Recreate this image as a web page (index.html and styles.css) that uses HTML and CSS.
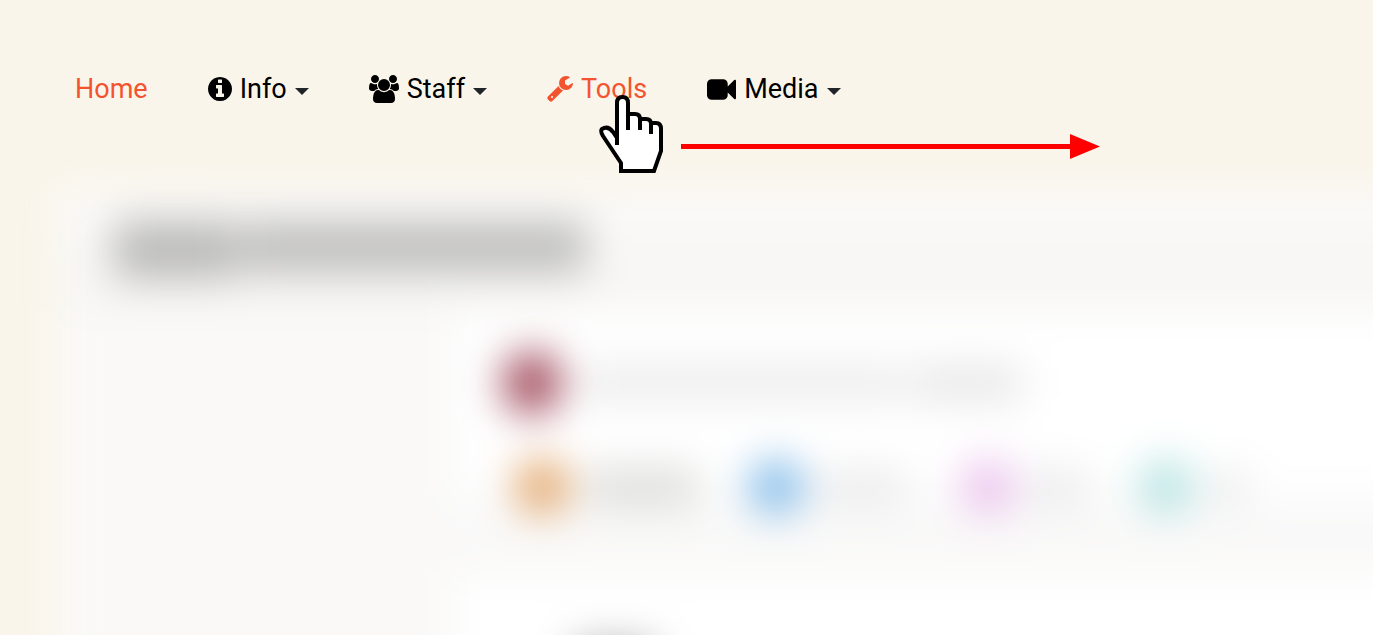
FILE: index.html
```
<!DOCTYPE html>
<html lang="en">
  <head>
    <meta charset="UTF-8" />
    <meta name="viewport" content="width=device-width, initial-scale=1.0" />
    <title>Tools</title>
    <link rel="stylesheet" href="styles.css" />
  </head>

  <body>
    <!-- navigation -->
    <nav class="navbar">
      <ul class="nav-list">
        <li class="nav-item">
          <a class="nav-link active" href="#home">Home</a>
        </li>
        <li class="nav-item">
          <button class="nav-link" type="button" aria-haspopup="true">
            <svg class="icon" width="24" height="24" viewBox="128 128 1536 1536" aria-hidden="true"><path d="M1152 1376v-160q0-14-9-23t-23-9h-96v-512q0-14-9-23t-23-9h-320q-14 0-23 9t-9 23v160q0 14 9 23t23 9h96v320h-96q-14 0-23 9t-9 23v160q0 14 9 23t23 9h448q14 0 23-9t9-23zm-128-896v-160q0-14-9-23t-23-9h-192q-14 0-23 9t-9 23v160q0 14 9 23t23 9h192q14 0 23-9t9-23zm640 416q0 209-103 385.5t-279.5 279.5-385.5 103-385.5-103-279.5-279.5-103-385.5 103-385.5 279.5-279.5 385.5-103 385.5 103 279.5 279.5 103 385.5z" /></svg>
            Info
            <span class="caret"></span>
          </button>
        </li>
        <li class="nav-item">
          <button class="nav-link" type="button" aria-haspopup="true">
            <svg class="icon" width="30" height="28" viewBox="-64 0 1920 1792" aria-hidden="true"><path d="M529 896q-162 5-265 128h-134q-82 0-138-40.500t-56-118.500q0-353 124-353 6 0 43.500 21t97.500 42.500 119 21.500q67 0 133-23-5 37-5 66 0 139 81 256zm1071 637q0 120-73 189.500t-194 69.500h-874q-121 0-194-69.500t-73-189.500q0-53 3.500-103.500t14-109 26.500-108.500 43-97.500 62-81 85.500-53.500 111.500-20q10 0 43 21.500t73 48 107 48 135 21.500 135-21.500 107-48 73-48 43-21.500q61 0 111.500 20t85.500 53.500 62 81 43 97.500 26.500 108.500 14 109 3.500 103.500zm-1024-1277q0 106-75 181t-181 75-181-75-75-181 75-181 181-75 181 75 75 181zm704 384q0 159-112.500 271.500t-271.500 112.500-271.500-112.500-112.500-271.500 112.500-271.500 271.500-112.500 271.500 112.500 112.500 271.500zm576 225q0 78-56 118.500t-138 40.500h-134q-103-123-265-128 81-117 81-256 0-29-5-66 66 23 133 23 59 0 119-21.500t97.500-42.500 43.500-21q124 0 124 353zm-128-609q0 106-75 181t-181 75-181-75-75-181 75-181 181-75 181 75 75 181z" /></svg>
            Staff
            <span class="caret"></span>
          </button>
        </li>
        <li class="nav-item">
          <a class="nav-link active" href="#tools">
            <svg class="icon" width="26" height="26" viewBox="64 128 1664 1664" aria-hidden="true"><path d="M448 1472q0-26-19-45t-45-19-45 19-19 45 19 45 45 19 45-19 19-45zm644-420l-682 682q-37 37-90 37-52 0-91-37l-106-108q-38-36-38-90 0-53 38-91l681-681q39 98 114.500 173.500t173.500 114.500zm634-435q0 39-23 106-47 134-164.500 217.500t-258.500 83.500q-185 0-316.500-131.500t-131.500-316.500 131.500-316.500 316.500-131.500q58 0 121.500 16.500t107.500 46.500q16 11 16 28t-16 28l-293 169v224l193 107q5-3 79-48.500t135.500-81 70.500-35.500q15 0 23.500 10t8.500 25z" /></svg>
            Tools
          </a>
          <!-- hand and arrow lie over the page -->
          <div class="pointer">
            <svg width="66" height="79" viewBox="0 0 66 79" aria-hidden="true">
              <path d="M18 47V8Q18 2 23.500 2T29 8V19H36Q41 19 41 24H47Q52 24 52 28H57Q62 28 62 34V56L55 76H22V68L4 41Q1 36 3 34Q9 30 14 37L18 43Z" fill="#fff" />
              <path d="M18 50V8Q18 2 23.500 2T29 8V35M29 19H36Q41 19 41 24V35M41 24H47Q52 24 52 29V39M52 28H57Q62 28 62 34V56L55 76H22V68L4 41Q1 36 3 34Q9 30 14 37L18 43" fill="none" stroke="#000" stroke-width="4" />
            </svg>
            <svg class="arrow" width="419" height="26" viewBox="0 0 419 26" aria-hidden="true">
              <path d="M0 10H389V0L419 12.500L389 25V15H0Z" fill="#f00" />
            </svg>
          </div>
        </li>
        <li class="nav-item">
          <button class="nav-link" type="button" aria-haspopup="true">
            <svg class="icon" width="29" height="21" viewBox="0 256 1792 1280" aria-hidden="true"><path d="M1792 352v1088q0 42-39 59-13 5-25 5-27 0-45-19l-403-403v166q0 119-84.500 203.500t-203.500 84.500h-704q-119 0-203.500-84.500t-84.500-203.500v-704q0-119 84.500-203.500t203.500-84.500h704q119 0 203.500 84.500t84.500 203.500v165l403-402q18-19 45-19 12 0 25 5 39 17 39 59z" /></svg>
            Media
            <span class="caret"></span>
          </button>
        </li>
      </ul>
    </nav>

    <!-- blurred content -->
    <main class="content" aria-hidden="true">
      <div class="title-row">
        <span class="word word-short"></span>
        <span class="word word-long"></span>
      </div>
      <div class="columns">
        <div class="card card-people">
          <div class="row">
            <span class="dot dot-maroon"></span>
            <span class="line line-name"></span>
            <span class="line line-end"></span>
          </div>
          <div class="row row-tags">
            <span class="dot dot-orange"></span>
            <span class="line line-orange"></span>
            <span class="dot dot-blue"></span>
            <span class="line line-blue"></span>
            <span class="dot dot-pink"></span>
            <span class="line line-pink"></span>
            <span class="dot dot-teal"></span>
            <span class="line line-teal"></span>
          </div>
        </div>
        <div class="card card-next">
          <span class="line line-next"></span>
        </div>
      </div>
    </main>
  </body>
</html>
```

FILE: styles.css
```
* {
  box-sizing: border-box;
}

body {
  margin: 0;
  height: 100vh;
  overflow: hidden;
  background-color: #faf5ea;
  font-family: Roboto, "Liberation Sans", sans-serif;
  font-size: 27px;
}

.navbar {
  position: relative;
  z-index: 1;
  padding: 69px 75px 0;
}

.nav-list {
  display: flex;
  gap: 60px;
  margin: 0;
  padding: 0;
  list-style: none;
}

.nav-item {
  position: relative;
}

.nav-link {
  display: flex;
  align-items: center;
  gap: 8px;
  height: 40px;
  padding: 0;
  border: 0;
  background: none;
  color: #000;
  font: inherit;
  text-decoration: none;
  cursor: pointer;
}

.nav-link.active,
.nav-link:hover {
  color: #f4532f;
}

.icon {
  flex: none;
  fill: currentColor;
}

.caret {
  margin-top: 4px;
  border-top: 7px solid #212529;
  border-left: 7px solid transparent;
  border-right: 7px solid transparent;
}

.pointer {
  position: absolute;
  top: 26px;
  left: 52px;
  display: flex;
  align-items: flex-start;
  gap: 16px;
  pointer-events: none;
}

.arrow {
  margin-top: 39px;
}

.content {
  margin: 78px -80px 0 54px;
  background-color: #faf9f8;
  filter: blur(20px);
}

.title-row {
  display: flex;
  gap: 4px;
  height: 122px;
  padding: 34px 60px 0;
  background: linear-gradient(#fbfaf9, #f6f5f3);
}

.word {
  height: 52px;
  background-color: #bfbfbe;
}

.word-short {
  width: 124px;
  height: 58px;
  background-color: #bbbbba;
}

.word-long {
  width: 344px;
}

.columns {
  padding-left: 400px;
}

.card {
  background-color: #fff;
}

.card-people {
  height: 225px;
  padding-top: 42px;
  background: linear-gradient(#fff 75%, #f7f7f7);
}

.card-next {
  height: 225px;
  margin-top: 40px;
  padding: 70px 0 0 120px;
}

.row {
  display: flex;
  align-items: center;
  padding-left: 48px;
}

.row-tags {
  margin-top: 44px;
  padding-left: 60px;
}

.dot {
  flex: none;
  width: 56px;
  height: 56px;
  border-radius: 50%;
}

.dot-maroon {
  width: 60px;
  height: 64px;
  background-color: #a34f60;
}

.dot-orange {
  background-color: #e3a970;
}

.dot-blue {
  background-color: #86bdea;
}

.dot-pink {
  background-color: #ecc4ee;
}

.dot-teal {
  background-color: #b8e4e3;
}

.line {
  flex: none;
  height: 34px;
  background-color: #ebebeb;
}

.line-name {
  width: 320px;
  margin-left: 20px;
}

.line-end {
  width: 110px;
  margin-left: 10px;
  background-color: #e6e6e6;
}

.line-orange {
  width: 112px;
  height: 40px;
  margin: 0 50px 0 16px;
  background-color: #dfdfdd;
}

.line-blue {
  width: 90px;
  margin: 0 54px 0 12px;
}

.line-pink {
  width: 60px;
  margin: 0 50px 0 12px;
}

.line-teal {
  width: 36px;
  margin-left: 16px;
}

.line-next {
  display: block;
  width: 80px;
  background-color: #aaa;
}
```
